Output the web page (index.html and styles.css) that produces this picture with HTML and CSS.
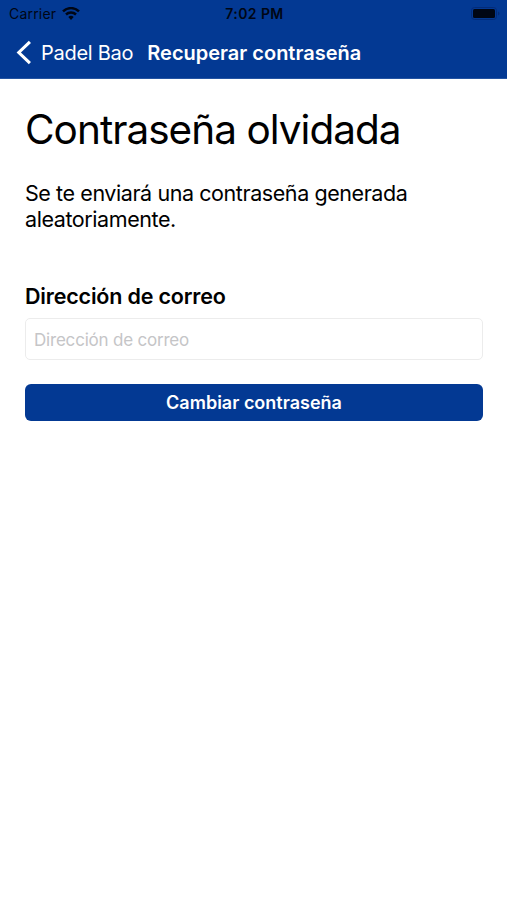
FILE: index.html
```html
<!DOCTYPE html>
<html lang="es">

<head>
    <meta charset="UTF-8">
    <meta name="viewport" content="width=device-width, initial-scale=1.0">
    <title>Recuperar contraseña</title>
    <link rel="stylesheet" href="styles.css">
</head>

<body>
    <header class="header">
        <div class="status-bar">
            <div class="carrier">
                <span class="carrier-name">Carrier</span>
                <svg class="wifi" width="18" height="14" viewBox="0 0 18 14">
                    <path d="M1 4.4a11.4 11.4 0 0 1 16 0M4 7.5a7.3 7.3 0 0 1 10 0" fill="none" stroke="currentColor" stroke-width="2.5"/>
                    <path d="M6.3 10.1a4 4 0 0 1 5.4 0L9 12.9z" fill="currentColor"/>
                </svg>
            </div>
            <span class="time">7:02 PM</span>
            <svg class="battery" width="29" height="14" viewBox="0 0 29 14">
                <rect x="0.5" y="0.5" width="25" height="12" rx="3" fill="none" stroke="#032b78"/>
                <rect x="2" y="2" width="22" height="9" rx="1.5" fill="currentColor"/>
                <path d="M27 4.5c2 .8 2 3.2 0 4z" fill="#032b78"/>
            </svg>
        </div>
        <nav class="nav">
            <a class="back" href="#">
                <svg class="chevron" width="16" height="25" viewBox="0 0 16 25">
                    <path d="M13.9 1.8L2.8 12.5l11.1 10.7" fill="none" stroke="currentColor" stroke-width="3.1"/>
                </svg>
                <span class="back-text">Padel Bao</span>
            </a>
            <span class="nav-title">Recuperar contraseña</span>
        </nav>
    </header>

    <main class="content">
        <h1 class="title">Contraseña olvidada</h1>
        <p class="description">Se te enviará una contraseña generada aleatoriamente.</p>
        <form class="form">
            <label class="label" for="email">Dirección de correo</label>
            <input class="input" type="email" id="email" placeholder="Dirección de correo">
            <button class="btn" type="button">Cambiar contraseña</button>
        </form>
    </main>
</body>

</html>
```
FILE: styles.css
```css
* {
    box-sizing: border-box;
}

body {
    margin: 0;
    background-color: white;
    color: black;
    font-family: Inter, 'Liberation Sans', sans-serif;
}

.header {
    height: 79px;
    background-color: #033993;
    border-bottom: 1px solid #2454a2;
}

.status-bar {
    display: grid;
    grid-template-columns: 1fr auto 1fr;
    align-items: center;
    height: 27px;
    padding: 0 7px 0 9px;
    font-size: 14px;
    color: #000614;
}

.carrier {
    display: flex;
    align-items: center;
    gap: 6px;
}

.carrier-name {
    letter-spacing: 0.2px;
}

.time {
    font-weight: 600;
    letter-spacing: 0.4px;
}

.battery {
    justify-self: end;
}

.nav {
    display: flex;
    align-items: center;
    gap: 14px;
    height: 51px;
    padding-left: 16px;
    font-size: 20px;
    color: white;
}

.back {
    display: flex;
    align-items: center;
    gap: 9px;
    color: white;
    letter-spacing: -0.27px;
    text-decoration: none;
}

.nav-title {
    font-weight: 560;
    letter-spacing: 0;
}

.content {
    padding: 26px 24px 0 25px;
}

.title {
    margin: 0;
    font-size: 40.5px;
    font-weight: 400;
    letter-spacing: -0.97px;
    line-height: 50px;
    white-space: nowrap;
}

.description {
    margin: 25px 0 0;
    font-size: 21.5px;
    letter-spacing: -0.42px;
    line-height: 26px;
}

.form {
    display: flex;
    flex-direction: column;
    margin-top: 50px;
}

.label {
    font-size: 21.5px;
    font-weight: 560;
    letter-spacing: -0.18px;
    line-height: 28px;
}

.input {
    height: 42px;
    margin-top: 8px;
    padding: 1px 8px 0;
    border: 1px solid #ececec;
    border-radius: 5px;
    outline: none;
    font-family: inherit;
    font-size: 17px;
    letter-spacing: -0.2px;
}

.input::placeholder {
    color: #c5c5c7;
}

.btn {
    height: 37px;
    margin-top: 24px;
    padding: 0;
    border: none;
    border-radius: 6px;
    background-color: #033993;
    color: white;
    font-family: inherit;
    font-size: 18px;
    font-weight: 560;
}
```
